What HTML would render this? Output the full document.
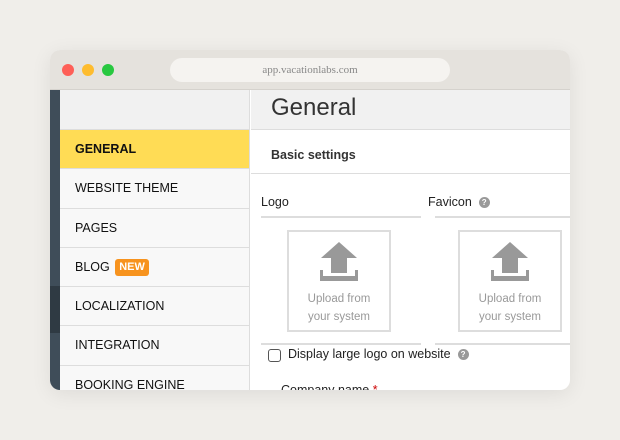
<!DOCTYPE html>
<html><head><style>
*{margin:0;padding:0;box-sizing:border-box}
body{width:620px;height:440px;background:#f0eeea;font-family:"Liberation Sans",sans-serif;position:relative;overflow:hidden}
.win{position:absolute;left:50px;top:50px;width:520px;height:340px;border-radius:10px;overflow:hidden;background:#fff;box-shadow:0 4px 20px rgba(0,0,0,.08)}
.tb{position:absolute;left:0;top:0;width:520px;height:40px;background:#e5e2dd;border-bottom:1px solid #d5d2cd}
.dot{position:absolute;top:14px;width:12px;height:12px;border-radius:50%}
.url{position:absolute;left:120px;top:8px;width:280px;height:24px;border-radius:12px;background:#f5f3f0;font-family:"Liberation Serif",serif;font-size:11px;color:#888;text-align:center;line-height:24px}
.strip{position:absolute;left:0;top:40px;width:10px;height:300px;background:#3f4d59}
.strip2{position:absolute;left:0;top:236px;width:10px;height:47px;background:#2f3a43}
.side{position:absolute;left:10px;top:40px;width:190px;height:300px;background:#f8f8f8;border-right:1px solid #ddd}
.stop{height:40px;background:#f1f1f1;border-bottom:1px solid #ddd}
.it{height:39.3px;border-bottom:1px solid #ddd;font-size:12.5px;color:#111;padding-left:15px;line-height:38px}
.it.a{background:#ffdc55;font-weight:bold}
.new{display:inline-block;background:#f7931e;color:#fff;font-weight:bold;font-size:11px;line-height:17px;padding:0 4px;border-radius:3px;margin-left:2px;vertical-align:1px}
.hd{position:absolute;left:201px;top:40px;width:319px;height:40px;background:#f1f1f1;border-bottom:1px solid #ddd;font-size:24px;color:#333;padding-left:20px;line-height:36px}
.bs{position:absolute;left:201px;top:81px;width:319px;height:43px;border-bottom:1px solid #ddd;font-size:12.5px;font-weight:bold;color:#333;padding-left:20px;line-height:48px}
.lbl{position:absolute;top:145px;font-size:12.5px;color:#222}
.ln{position:absolute;height:2px;background:#ddd}
.box{position:absolute;top:180px;width:104px;height:102px;border:2px solid #ddd;text-align:center;font-size:11.5px;color:#999;line-height:18px;padding-top:58px}
.q{display:inline-block;width:11px;height:11px;border-radius:50%;background:#999;color:#fff;font-size:8px;font-weight:bold;line-height:11px;text-align:center;vertical-align:1px}
</style></head><body>
<div class="win">
<div class="tb"><div class="dot" style="left:12px;background:#fe5f57"></div><div class="dot" style="left:32px;background:#febc2e"></div><div class="dot" style="left:52px;background:#28c840"></div><div class="url">app.vacationlabs.com</div></div>
<div class="strip"></div><div class="strip2"></div>
<div class="side"><div class="stop"></div>
<div class="it a">GENERAL</div><div class="it">WEBSITE THEME</div><div class="it">PAGES</div><div class="it">BLOG <span class="new">NEW</span></div><div class="it">LOCALIZATION</div><div class="it">INTEGRATION</div><div class="it">BOOKING ENGINE</div></div>
<div class="hd">General</div>
<div class="bs">Basic settings</div>
<div class="lbl" style="left:211px">Logo</div>
<div class="lbl" style="left:378px">Favicon &nbsp;<span class="q">?</span></div>
<div class="ln" style="left:211px;top:166px;width:160px"></div>
<div class="ln" style="left:385px;top:166px;width:135px"></div>
<div class="box" style="left:237px"><svg style="position:absolute;left:31px;top:9px" width="38" height="40" viewBox="0 0 38 40"><path d="M19 1 L37 17 L27 17 L27 32 L11 32 L11 17 L1 17 Z" fill="#999"/><path d="M0 29 h3 v6 h32 v-6 h3 v11 h-38z" fill="#999"/></svg>Upload from<br>your system</div>
<div class="box" style="left:408px"><svg style="position:absolute;left:31px;top:9px" width="38" height="40" viewBox="0 0 38 40"><path d="M19 1 L37 17 L27 17 L27 32 L11 32 L11 17 L1 17 Z" fill="#999"/><path d="M0 29 h3 v6 h32 v-6 h3 v11 h-38z" fill="#999"/></svg>Upload from<br>your system</div>
<div class="ln" style="left:211px;top:293px;width:160px"></div>
<div class="ln" style="left:385px;top:293px;width:135px"></div>
<div style="position:absolute;left:218px;top:299px;width:13px;height:13px;border:1px solid #555;border-radius:3px;background:#fff"></div>
<div style="position:absolute;left:238px;top:297px;font-size:12.5px;color:#222">Display large logo on website &nbsp;<span class="q">?</span></div>
<div style="position:absolute;left:231px;top:333px;font-size:12.5px;color:#222">Company name <span style="color:#c00">*</span></div>
</div>
</body></html>
